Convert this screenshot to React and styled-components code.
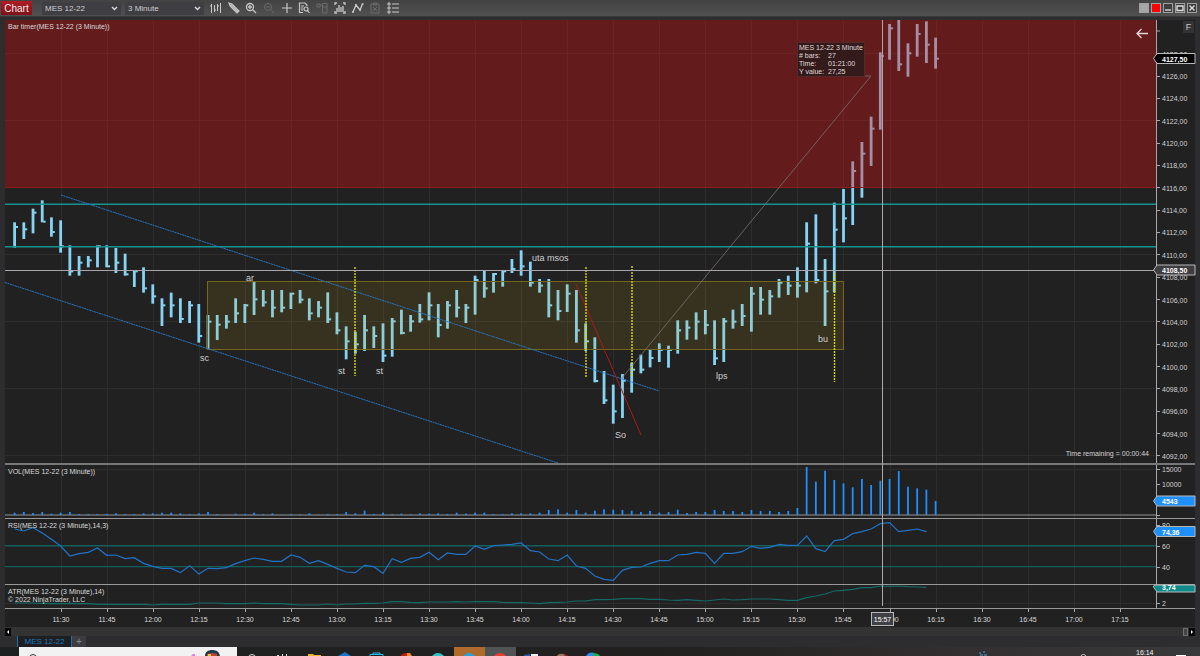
import React from "react";
import styled, { createGlobalStyle } from "styled-components";

const GlobalStyle = createGlobalStyle`
  * {
    box-sizing: border-box;
  }

  body {
    margin: 0;
    background: #2d2d30;
    font-family: "Liberation Sans", Arial, sans-serif;
    font-size: 7px;
    color: #d2d2d2;
  }

  button, input, select {
    font-family: inherit;
    margin: 0;
    padding: 0;
    border: 0;
    border-radius: 0;
    outline: 0;
  }
`;

const Screen = styled.div`
  display: flex;
  flex-direction: column;
  height: 100vh;
  overflow: hidden;
`;

const Toolbar = styled.header`
  display: flex;
  align-items: center;
  flex: 0 0 17px;
  padding: 0 3px 0 1px;
  background: linear-gradient(#434343, #505050);
  border-bottom: 1px solid #3a3a3a;
`;

const ChartButton = styled.button`
  width: 31px;
  height: 14px;
  margin-right: 10px;
  background: linear-gradient(#b01c24, #7c1219);
  color: #f4eaea;
  font-size: 10px;
  line-height: 15px;
`;

const SelectBox = styled.div`
  position: relative;
  width: 79px;
  height: 13px;
  margin-right: 4px;

  select {
    display: block;
    width: 100%;
    height: 13px;
    padding: 0 14px 0 3px;
    appearance: none;
    background: #3e3e43;
    color: #d0d0d0;
    font-size: 8px;
    line-height: 13px;
  }

  svg {
    position: absolute;
    right: 3px;
    top: 4px;
    pointer-events: none;
  }
`;

const Tools = styled.nav`
  display: flex;
  justify-content: space-between;
  width: 189px;
  margin-left: 2px;
`;

const ToolButton = styled.button`
  display: flex;
  width: 12px;
  height: 12px;
  background: none;
  color: ${({ $dim }) => ($dim ? "#6a6a6a" : "#c8c8c8")};

  svg {
    width: 12px;
    height: 12px;
    fill: none;
    stroke: currentColor;
    stroke-width: 1;
  }
`;

const WindowButtons = styled.div`
  display: flex;
  gap: 2px;
  margin-left: auto;
`;

const WindowButton = styled.button`
  display: flex;
  width: 10px;
  height: 10px;
  border: 1px solid #a0a0a0;
  background: ${({ $color }) => $color || "#3c3c3c"};

  svg {
    width: 8px;
    height: 8px;
    fill: none;
    stroke: #dcdcdc;
    stroke-width: 1.4;
  }
`;

const Workspace = styled.main`
  position: relative;
  display: flex;
  flex-direction: column;
  flex: 1;
  min-height: 0;
  margin: 3px 5px 0;
  background: #212121;
`;

const Pane = styled.section`
  display: flex;
  flex: ${({ $height }) => ($height ? `0 0 ${$height}px` : "1 1 0")};
  min-height: 0;
  border-bottom: ${({ $line }) => $line || 1}px solid ${({ $line }) => ($line ? "#777" : "#999")};
`;

const Plot = styled.div`
  position: relative;
  flex: 1;
  min-width: 0;
  overflow: hidden;

  > svg {
    display: block;
    width: 100%;
    height: 100%;
  }
`;

const Axis = styled.div`
  position: relative;
  width: 39px;
  border-left: 1px solid #a8a8a8;

  > svg {
    display: block;
    width: 100%;
    height: 100%;
    overflow: visible;
  }

  text {
    font-size: 7px;
    fill: #d2d2d2;
  }
`;

const PaneTitle = styled.h2`
  position: absolute;
  left: 3px;
  top: 3px;
  margin: 0;
  font-size: 7px;
  font-weight: 400;
  line-height: 8px;
  color: #dadada;
  white-space: pre-line;
`;

const TimerText = styled.p`
  position: absolute;
  right: 7px;
  bottom: 5px;
  margin: 0;
  line-height: 8px;
`;

const RulerTip = styled.dl`
  position: absolute;
  left: 792px;
  top: 22px;
  display: grid;
  grid-template-columns: 29px auto;
  width: 68px;
  margin: 0;
  padding: 1px 0 0 1px;
  border: 1px solid #55282a;
  background: #331b1c;
  color: #e0dada;
  line-height: 8px;
  white-space: nowrap;

  dt:first-child {
    grid-column: 1 / 3;
  }

  dd {
    margin: 0;
  }
`;

const BackButton = styled.button`
  position: absolute;
  right: 8px;
  top: 8px;
  display: flex;
  background: none;
`;

const FixButton = styled.button`
  position: absolute;
  right: 1px;
  top: 1px;
  width: 11px;
  height: 12px;
  background: #333336;
  color: #c8c8c8;
  font-size: 9px;
  line-height: 12px;
`;

const TimeAxis = styled.div`
  flex: 0 0 18px;

  svg {
    display: block;
    width: 100%;
    height: 18px;
  }

  text {
    font-size: 7px;
    fill: #dadada;
    text-anchor: middle;
  }
`;

const CrossHair = styled.div`
  position: absolute;
  left: 877px;
  top: 0;
  bottom: 21px;
  border-left: 1px solid #b0a8a8;
`;

const CrossTime = styled.output`
  position: absolute;
  left: 866px;
  bottom: 1px;
  width: 23px;
  height: 14px;
  border: 1px solid #b8b8b8;
  background: #3f3f46;
  color: #fff;
  line-height: 13px;
  text-align: center;
`;

const ScrollBar = styled.div`
  display: flex;
  align-items: center;
  justify-content: space-between;
  flex: 0 0 9px;
  margin: 0 5px;
  background: #333334;
`;

const ScrollEnd = styled.div`
  display: flex;
  gap: 1px;
`;

const ScrollThumb = styled.span`
  width: 5px;
  height: 8px;
  border: 1px solid #707070;
  background: #444;
`;

const ScrollButton = styled.button`
  display: flex;
  width: 6px;
  height: 8px;
  background: #000;
`;

const Tabs = styled.nav`
  display: flex;
  flex: 0 0 11px;
  height: 11px;
  min-height: 0;
  padding-left: 17px;
`;

const Tab = styled.button`
  width: 55px;
  height: 11px;
  border-left: 1px solid #1c6fb0;
  border-right: 1px solid #1c6fb0;
  background: #1f1f22;
  color: #1b78bd;
  font-size: 8px;
  line-height: 12px;
`;

const AddTab = styled.button`
  width: 14px;
  height: 11px;
  background: #3d3d41;
  color: #8a8a8a;
  font-size: 10px;
  line-height: 11px;
`;

const TaskBar = styled.footer`
  display: flex;
  flex: 0 0 9px;
  overflow: hidden;
  background: linear-gradient(90deg, #1d2021, #22201f 55%, #332f30 80%, #38393a);
`;

const StartButton = styled.button`
  width: 19px;
  background: none;
`;

const SearchBox = styled.label`
  position: relative;
  width: 218px;

  input {
    display: block;
    width: 100%;
    height: 20px;
    background: #f2f2f2;
  }

  svg {
    position: absolute;
    left: 0;
    top: 0;
  }
`;

const Task = styled.button`
  display: flex;
  width: 31px;
  background: ${({ $color }) => $color || "none"};
`;

const Tray = styled.div`
  display: flex;
  margin-left: auto;
  color: #f4f4f4;

  svg {
    display: block;
  }

  time {
    width: 40px;
    margin-top: 2px;
    line-height: 8px;
  }
`;

// high, low, close of each bar, measured in thirds of a pixel below a base line
const bars = (base, rows) => rows.map((row) => row.map((v) => (v + base) / 3));

const PRICE = [
  ...bars(480, [
    [127, 203, 141], [127, 177, 148], [86, 160, 98], [61, 127, 125], [112, 170, 156], [121, 218, 199],
    [196, 287, 274], [228, 287, 248], [228, 262, 241], [196, 262, 199], [196, 262, 259], [204, 279, 248],
    [221, 287, 283], [271, 321, 274], [262, 338, 325], [313, 371, 349], [355, 438, 376], [338, 412, 376],
    [355, 429, 417], [363, 429, 376], [372, 488, 468], [405, 507, 425], [405, 480, 434], [405, 446, 425],
    [355, 429, 400], [372, 429, 376], [305, 405, 358], [330, 380, 367], [330, 412, 383], [330, 397, 383],
    [338, 387, 341],
  ]),
  ...bars(630, [
    [180, 220, 209], [205, 271, 250], [213, 262, 233], [187, 279, 268], [247, 313, 301], [289, 388, 334],
    [305, 371, 343], [255, 363, 301], [289, 354, 318], [280, 396, 377], [264, 380, 274], [239, 313, 309],
    [255, 305, 274], [222, 278, 268], [187, 271, 226], [222, 322, 285], [213, 296, 226], [180, 262, 233],
    [222, 279, 233], [137, 254, 150], [121, 203, 175], [129, 188, 132], [121, 170, 124], [87, 129, 117],
    [61, 137, 109], [95, 170, 158], [147, 188, 167], [147, 262, 226], [180, 271, 243], [163, 246, 191],
    [180, 338, 301], [280, 363, 334], [322, 457, 453], [423, 522, 511], [464, 581, 544], [432, 564, 452],
    [398, 488, 419], [374, 430, 419], [357, 412, 384], [340, 396, 360], [347, 413, 360], [271, 371, 301],
    [271, 329, 293], [247, 329, 275], [240, 313, 285], [271, 405, 385], [264, 396, 274], [239, 296, 275],
    [222, 288, 258], [171, 305, 191], [171, 254, 209], [180, 254, 199], [147, 203, 158], [137, 195, 167],
    [112, 203, 167], [-23, 187, 41], [-47, 160, 150], [87, 288, 184], [-82, 187, -1],
  ]),
  ...bars(0, [
    [507, 667, 595], [424, 615, 453], [366, 533, 401], [290, 438, 326], [97, 329, 108], [12, 119, 25],
    [0, 153, 133], [70, 170, 100], [12, 110, 42], [4, 129, 74], [53, 146, 116],
  ]),
];

const VOLUME = [
  7, 9, 6, 9, 4, 7, 9, 3, 3, 3, 3, 5, 3, 3, 5, 5, 7, 7, 5, 3, 5, 9, 3, 1, 4, 3, 7, 3, 5, 1, 3, 2, 5, 1, 3, 3,
  9, 5, 13, 3, 7, 3, 4, 2, 5, 4, 5, 3, 7, 4, 7, 7, 3, 3, 5, 5, 5, 7, 15, 17, 7, 15, 7, 13, 17, 16, 15, 13, 9,
  12, 7, 9, 16, 6, 9, 9, 15, 12, 12, 9, 15, 12, 12, 9, 12, 21, 144, 100, 133, 105, 95, 83, 108, 90, 103, 108,
  132, 85, 80, 76, 42,
];

const RSI = [
  222, 228, 218, 234, 253, 273, 303, 296, 292, 279, 301, 300, 311, 308, 325, 334, 340, 340, 353, 332, 357, 340,
  341, 338, 326, 317, 309, 313, 319, 319, 300, 307, 325, 317, 328, 340, 351, 353, 331, 335, 355, 311, 322, 310,
  307, 292, 314, 294, 298, 298, 273, 283, 272, 270, 268, 264, 287, 291, 312, 317, 300, 333, 340, 363, 373, 376,
  346, 337, 336, 325, 317, 317, 300, 298, 292, 295, 325, 295, 295, 290, 274, 280, 277, 268, 271, 271, 243, 281,
  290, 257, 253, 236, 230, 222, 206, 203, 230, 226, 222, 230,
];

const ATR = [
  444, 444, 444, 445, 446, 446, 446, 446, 446, 448, 448, 448, 448, 448, 448, 450, 448, 448, 448, 448, 444, 444,
  444, 446, 446, 446, 444, 446, 446, 446, 448, 450, 450, 450, 447, 450, 447, 447, 445, 445, 444, 440, 440, 442,
  443, 441, 441, 441, 440, 441, 440, 440, 440, 442, 443, 443, 444, 446, 443, 442, 441, 438, 438, 434, 434, 433,
  431, 431, 431, 433, 433, 435, 436, 434, 436, 438, 435, 432, 435, 434, 432, 432, 432, 434, 436, 436, 428, 423,
  417, 408, 406, 403, 398, 398, 393, 394, 393, 395, 396, 397,
];

const barX = (i) => 9.6 + i * 9.21;
const linePoints = (values, top) => values.map((v, i) => `${barX(i)},${v / 3 - top}`).join(" ");

const TIMES = Array.from({ length: 24 }, (_, i) => {
  const minutes = 11 * 60 + 30 + i * 15;
  return `${Math.floor(minutes / 60)}:${String(minutes % 60).padStart(2, "0")}`;
});
const timeX = (i) => Math.round(55.6 + i * 46.05);

const priceY = (price) => 56 + (4126 - price) * 11.175;
const PRICE_LABELS = Array.from({ length: 19 }, (_, i) => 4092 + i * 2);

const NOTES = [
  ["ar", 241, 261], ["sc", 195, 341], ["st", 333, 354], ["st", 371, 354], ["uta msos", 527, 241],
  ["So", 610, 418], ["bu", 813, 322], ["lps", 711, 359],
];

const MARKERS = [[350, 247, 356], [581, 247, 357], [627, 246, 356], [829.5, 253, 362]];

const Grid = ({ rows }) => (
  <g stroke="#2d2d2d" shapeRendering="crispEdges">
    {TIMES.map((time, i) => <line key={time} x1={timeX(i)} x2={timeX(i)} y1="0" y2="100%"/>)}
    {rows.map((y) => <line key={y} x1="0" x2="100%" y1={y} y2={y}/>)}
  </g>
);

const Tick = ({ y, children }) => (
  <g>
    <line x1="0" x2="3" y1={y} y2={y} stroke="#a8a8a8" shapeRendering="crispEdges"/>
    <text x="5" y={y + 3}>{children}</text>
  </g>
);

const AxisTag = ({ y, color, border = "#b8b8b8", children }) => (
  <g transform={`translate(0 ${y})`}>
    <path d="M-3.5 0L0-5H38V5H0Z" fill={color} stroke={border}/>
    <text x="5" y="3" style={{ fill: "#fff", fontWeight: 700 }}>{children}</text>
  </g>
);

const PricePlot = () => (
  <svg>
    <Grid rows={[33, 100, 234, 301, 368, 435]}/>
    <g fill="#87d3f3">
      {PRICE.map(([high, low, close], i) => (
        <g key={i}>
          <rect x={barX(i) - 1.4} y={high} width="2.8" height={low - high}/>
          <rect x={barX(i) + 1} y={close - 1} width="2.4" height="2"/>
        </g>
      ))}
    </g>
    <rect width="100%" height="168" fill="rgba(224, 16, 18, 0.35)"/>
    <line x2="100%" y1="167.5" y2="167.5" stroke="#8c1c1e"/>
    <rect x="202.5" y="261.5" width="636" height="68" fill="rgba(200, 170, 20, 0.13)" stroke="#74671c"/>
    <g stroke="#159392" strokeWidth="1.6">
      <line x2="100%" y1="184.3" y2="184.3"/>
      <line x2="100%" y1="226.8" y2="226.8"/>
    </g>
    <g stroke="#2678c6" strokeDasharray="2 0.6">
      <line x1="56" y1="175" x2="654" y2="371"/>
      <line x1="0" y1="262.5" x2="553" y2="443"/>
    </g>
    <line x1="571" y1="264" x2="636" y2="415" stroke="#b01818"/>
    <path d="M617 358L866 56H859" fill="none" stroke="#7b7272" strokeWidth="0.8"/>
    <g stroke="#d8d80c" strokeWidth="1.4" strokeDasharray="2 1">
      {MARKERS.map(([x, y1, y2]) => <line key={x} x1={x} x2={x} y1={y1} y2={y2}/>)}
    </g>
    <line x2="100%" y1="250.5" y2="250.5" stroke="#aaa5aa"/>
    <g fill="#d0d0d0" fontSize="9">
      {NOTES.map(([text, x, y]) => <text key={x} x={x} y={y}>{text}</text>)}
    </g>
  </svg>
);

const TOOLS = [
  { name: "Chart style", icon: <path d="M1.500 2v9M4.500 3v7M7.500 2v7M10.500 1v10M0 4h1.500M4.500 8H6M7.500 4H9"/> },
  { name: "Drawing tools", icon: <path d="M1 1l3 1 7 7-2 2-7-7zM3 3l7 7M4 2L2 4" strokeWidth="1.2"/> },
  { name: "Zoom in", icon: <path d="M8.500 5a3.500 3.500 0 1 1-7 0a3.500 3.500 0 1 1 7 0M7.500 7.500L11 11M5 3v4M3 5h4" strokeWidth="1.3"/> },
  { name: "Zoom out", dim: true, icon: <path d="M8.500 5a3.500 3.500 0 1 1-7 0a3.500 3.500 0 1 1 7 0M7.500 7.500L11 11M3 5h4"/> },
  { name: "Cross hair", icon: <path d="M6 1v10M1 6h10" strokeWidth="1.2"/> },
  { name: "Data box", icon: <path d="M5 10.500H1.500V1H7l2 2v1M3 4h3M3 6h2M3 8h2M10 7a2 2 0 1 1-4 0a2 2 0 1 1 4 0M9.500 8.500L11.500 11" strokeWidth="1.2"/> },
  { name: "Chart trader", dim: true, icon: <path d="M6.500 1.500H11V11H6.500zM1 2h3v3H1zM4 3h2M7 5h4"/> },
  { name: "Indicators", icon: <path d="M1 3V1h2M9 1h2v2M1 9v2h2M9 11h2V9M3 10V6M5 10V3M7 10V5M9 10V4" strokeWidth="1.3"/> },
  { name: "Strategies", icon: <path d="M1 10L4 3l4 5 2.500-6M0 10h2M3 3h2M7 8h2M9.500 2h2" strokeWidth="1.3"/> },
  { name: "Strategy analyzer", dim: true, icon: <path d="M2 2h8v9H2zM4 1h4v2H4zM4 5l4 4M8 5L4 9"/> },
  { name: "Properties", icon: <path d="M1 1h2v2H1zM1 5h2v2H1zM1 9h2v2H1zM5 2h7M5 6h7M5 10h7"/> },
];

const TASKS = [
  { name: "Cortana", icon: <circle cx="15" cy="11" r="3.500" fill="none" stroke="#ddd"/> },
  { name: "Task view", icon: <path d="M9 8h2v1H9zM14 7h1v2h-1zM18 7h1v2h-1z" fill="#ddd"/> },
  { name: "Explorer", icon: <path d="M9 7h5l1 1h7v1H9z" fill="#f0b429"/> },
  { name: "Sync", icon: <path d="M8 9l7-4 6 4z" fill="#1774c9"/> },
  { name: "Store", icon: <path d="M9 9V7.500h13V9M12 7V6h7v1" fill="none" stroke="#2bb8ea"/> },
  { name: "Office", icon: <><path d="M9 9c0-2 3-3 6-3v3z" fill="#c21c12"/><path d="M15 6h3l2 3h-5z" fill="#f28b24"/></> },
  { name: "Edge", icon: <circle cx="15" cy="13" r="7" fill="#32c5c8"/> },
  { name: "Telegram", color: "#b06a2c", icon: <circle cx="15" cy="13" r="7" fill="#2aa1d8"/> },
  { name: "Recorder", color: "#505454", icon: <circle cx="15" cy="13" r="7" fill="#ef3d31"/> },
  { name: "Word", icon: <><path d="M8 8l6-1v2H8z" fill="#2a5ab4"/><path d="M15 7h7v2h-7z" fill="#e8ecf4"/></> },
  { name: "Media", icon: <><path d="M10 9c1-3 8-3 9 0z" fill="#9b7363"/><path d="M16 6l6 3h-4z" fill="#8c1d22"/></> },
  { name: "Chrome", icon: <><path d="M8 9c2-4 7-4 8-3v3z" fill="#2a8bf2"/><path d="M15 6c3 0 6 1 7 3h-7z" fill="#22ad4f"/></> },
];

const App = () => (
  <Screen>
    <GlobalStyle/>
    <Toolbar>
      <ChartButton>Chart</ChartButton>
      <SelectBox>
        <select aria-label="Instrument"><option>MES 12-22</option></select>
        <svg width="7" height="5"><path d="M1 1l2.500 2.500L6 1" fill="none" stroke="#ddd" strokeWidth="1.4"/></svg>
      </SelectBox>
      <SelectBox>
        <select aria-label="Interval"><option>3 Minute</option></select>
        <svg width="7" height="5"><path d="M1 1l2.500 2.500L6 1" fill="none" stroke="#ddd" strokeWidth="1.4"/></svg>
      </SelectBox>
      <Tools>
        {TOOLS.map(({ name, dim, icon }) => (
          <ToolButton key={name} $dim={dim} aria-label={name}>
            <svg viewBox="0 0 12 12">{icon}</svg>
          </ToolButton>
        ))}
      </Tools>
      <WindowButtons>
        <WindowButton $color="#a9a6a6" aria-label="Instrument link"/>
        <WindowButton $color="#ff0000" aria-label="Interval link"/>
        <WindowButton aria-label="Minimize"><svg><path d="M1 6h6"/></svg></WindowButton>
        <WindowButton aria-label="Maximize"><svg><path d="M1 2h6v4.500H1z"/></svg></WindowButton>
        <WindowButton aria-label="Close"><svg><path d="M1.500 1.500l5 5M6.500 1.500l-5 5"/></svg></WindowButton>
      </WindowButtons>
    </Toolbar>

    <Workspace>
      <Pane $line={2}>
        <Plot>
          <PricePlot/>
          <PaneTitle>Bar timer(MES 12-22 (3 Minute))</PaneTitle>
          <RulerTip>
            <dt>MES 12-22 3 Minute</dt>
            <dt># bars:</dt><dd>27</dd>
            <dt>Time:</dt><dd>01:21:00</dd>
            <dt>Y value:</dt><dd>27,25</dd>
          </RulerTip>
          <BackButton aria-label="Return to last bar">
            <svg width="12" height="11"><path d="M12 5.500H1M5.500 1L1 5.500 5.500 10" fill="none" stroke="#e0d8d8" strokeWidth="1.3"/></svg>
          </BackButton>
          <TimerText>Time remaining = 00:00:44</TimerText>
        </Plot>
        <Axis>
          <svg>
            {PRICE_LABELS.map((price) => <Tick key={price} y={priceY(price)}>{price},00</Tick>)}
            <line x2="3" y1="11" y2="11" stroke="#a8a8a8"/>
            <AxisTag y={38.5} color="#000">4127,50</AxisTag>
            <AxisTag y={250} color="#3f3c42">4108,50</AxisTag>
          </svg>
          <FixButton>F</FixButton>
        </Axis>
      </Pane>

      <Pane $height={54}>
        <Plot>
          <svg>
            <Grid rows={[4]}/>
            <rect y="49" width="100%" height="2" fill="#5a5a5a"/>
            {VOLUME.map((v, i) => (
              <rect key={i} x={barX(i) - 0.9} y={50 - v / 3} width="1.8" height={v / 3} fill="#1e90ff"/>
            ))}
          </svg>
          <PaneTitle>VOL(MES 12-22 (3 Minute))</PaneTitle>
        </Plot>
        <Axis>
          <svg>
            <Tick y={4}>15000</Tick>
            <Tick y={19}>10000</Tick>
            <Tick y={50}/>
            <AxisTag y={36} color="#1e90ff">4543</AxisTag>
          </svg>
        </Axis>
      </Pane>

      <Pane $height={66}>
        <Plot>
          <svg>
            <Grid rows={[]}/>
            <g stroke="#125f5e" strokeWidth="1.4">
              <line x2="100%" y1="26.8" y2="26.8"/>
              <line x2="100%" y1="47.6" y2="47.6"/>
            </g>
            <polyline points={linePoints(RSI, 64)} fill="none" stroke="#2173c6" strokeWidth="1.2"/>
          </svg>
          <PaneTitle>RSI(MES 12-22 (3 Minute),14,3)</PaneTitle>
        </Plot>
        <Axis>
          <svg>
            <Tick y={6}>80</Tick>
            <Tick y={27}>60</Tick>
            <Tick y={48}>40</Tick>
            <AxisTag y={12.5} color="#1e90ff">74,36</AxisTag>
          </svg>
        </Axis>
      </Pane>

      <Pane $height={24}>
        <Plot>
          <svg>
            <Grid rows={[18]}/>
            <polyline points={linePoints(ATR, 130)} fill="none" stroke="#146a66" strokeWidth="1.2"/>
          </svg>
          <PaneTitle>{"ATR(MES 12-22 (3 Minute),14)\n© 2022 NinjaTrader, LLC"}</PaneTitle>
        </Plot>
        <Axis>
          <svg>
            <Tick y={18}>2</Tick>
            <path d="M-3.500 1L-2 0H38V7H0L-3.500 2Z" fill="#0d8b88" stroke="#b8b8b8"/>
            <text x="5" y="5" style={{ fill: "#fff", fontWeight: 700 }}>3,74</text>
          </svg>
        </Axis>
      </Pane>

      <TimeAxis>
        <svg>
          {TIMES.map((time, i) => (
            <g key={time}>
              <line x1={timeX(i)} x2={timeX(i)} y2="3" stroke="#a8a8a8" shapeRendering="crispEdges"/>
              <text x={timeX(i)} y="13">{time}</text>
            </g>
          ))}
        </svg>
      </TimeAxis>
      <CrossHair/>
      <CrossTime>15:57</CrossTime>
    </Workspace>

    <ScrollBar>
      <ScrollButton aria-label="Scroll left"><svg width="6" height="8"><path d="M4 2v4L2 4z" fill="#fff"/></svg></ScrollButton>
      <ScrollEnd>
        <ScrollThumb/>
        <ScrollButton aria-label="Scroll right"><svg width="6" height="8"><path d="M2 2v4l2-2z" fill="#fff"/></svg></ScrollButton>
      </ScrollEnd>
    </ScrollBar>
    <Tabs>
      <Tab>MES 12-22</Tab>
      <AddTab aria-label="Add tab">+</AddTab>
    </Tabs>

    <TaskBar>
      <StartButton aria-label="Start"><svg width="19" height="9"><path d="M2 8l3-1v2H2zM6 7l4-1v3H6z" fill="#eee"/></svg></StartButton>
      <SearchBox>
        <input type="search" aria-label="Search"/>
        <svg width="218" height="9">
          <circle cx="14" cy="11" r="3.500" fill="none" stroke="#333"/>
          <path d="M172 9l2-2 2 0v2z" fill="#e879e0"/>
          <path d="M186 9c0-4 3-6 7-6 5 0 7 2 8 6z" fill="#1c3a4a"/>
          <path d="M188 7l5-1 5 1v2h-10z" fill="#c8412f"/>
          <path d="M189 7h3v2h-3z" fill="#f0c63a"/>
        </svg>
      </SearchBox>
      {TASKS.map(({ name, color, icon }) => (
        <Task key={name} $color={color} aria-label={name}>
          <svg width="31" height="9">{icon}</svg>
        </Task>
      ))}
      <Tray>
        <svg width="158" height="9">
          <path d="M1 6h2M5 5h2M2 8h3M6 8h3" stroke="#4da3e0"/>
          <path d="M103 9c1-2 4-2 5 0" fill="none" stroke="#ddd"/>
        </svg>
        <time>16:14</time>
        <svg width="24" height="9"><path d="M0 8h10v1H0z" fill="#fff"/></svg>
      </Tray>
    </TaskBar>
  </Screen>
);

export default App;
